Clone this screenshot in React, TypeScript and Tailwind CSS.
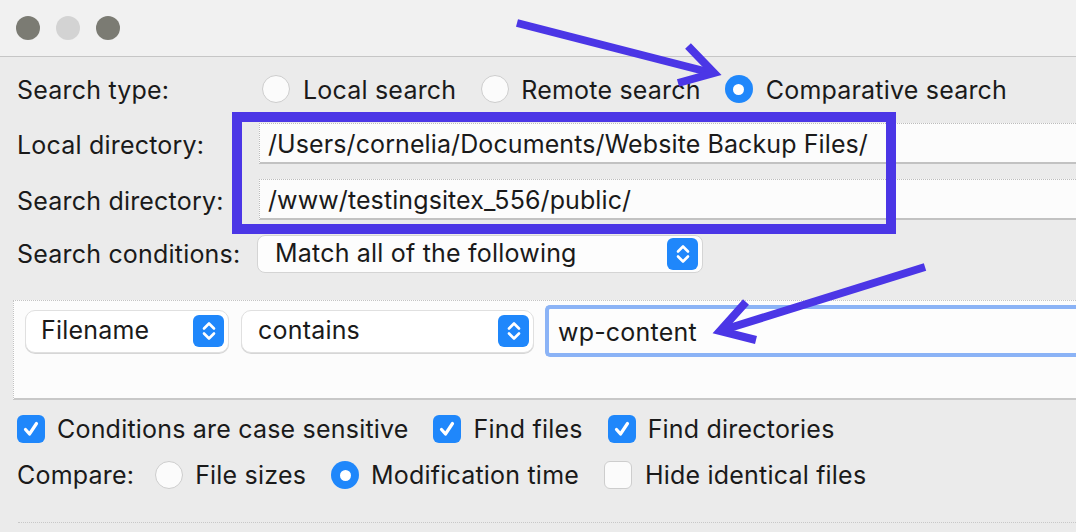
import React from 'react';

const font = { fontFamily: 'Inter, "Noto Sans", sans-serif' };

const Stepper = () => (
  <div className="flex h-[32px] w-[31px] shrink-0 items-center justify-center rounded-[6px] bg-[#1f87fb]">
    <svg width="16" height="24" viewBox="0 0 16 24" fill="none" stroke="white" strokeWidth="2.6" strokeLinecap="round" strokeLinejoin="round">
      <path d="M3 9.5 L8 4.5 L13 9.5" />
      <path d="M3 14.5 L8 19.5 L13 14.5" />
    </svg>
  </div>
);

const Radio = ({ checked }: { checked?: boolean }) =>
  checked ? (
    <div className="flex h-[28px] w-[28px] shrink-0 items-center justify-center rounded-full bg-[#1f87fb]">
      <div className="h-[11px] w-[11px] rounded-full bg-white" />
    </div>
  ) : (
    <div className="h-[28px] w-[28px] shrink-0 rounded-full border border-[#cdcdcd] bg-[#fbfbfb]" />
  );

const Checkbox = ({ checked }: { checked?: boolean }) =>
  checked ? (
    <div className="flex h-[28px] w-[28px] shrink-0 items-center justify-center rounded-[6px] bg-[#1f87fb]">
      <svg width="20" height="20" viewBox="0 0 20 20" fill="none" stroke="white" strokeWidth="3.2" strokeLinecap="round" strokeLinejoin="round">
        <path d="M4.5 10.5 L8.5 15 L15.5 4.5" />
      </svg>
    </div>
  ) : (
    <div className="h-[28px] w-[28px] shrink-0 rounded-[6px] border border-[#cdcdcd] bg-[#fbfbfb]" />
  );

const Label = ({ children }: { children: React.ReactNode }) => (
  <div className="w-[241px] shrink-0 pl-[17px] whitespace-nowrap">{children}</div>
);

const PathInput = ({ value }: { value: string }) => (
  <div className="flex h-[41px] flex-1 items-center border-t border-l border-dotted border-[#bcbcbc] bg-[#fcfcfc] pl-[8px] tracking-[0.1px] whitespace-nowrap shadow-[inset_0_-2px_0_#c2c2c2]">
    <span className="relative top-[1px]">{value}</span>
  </div>
);

export default function App() {
  return (
    <div className="relative h-[532px] w-[1076px] overflow-hidden bg-[#ebebeb] text-[25px] tracking-[0.2px] text-[#1a1a1a]" style={font}>
      {/* title bar */}
      <div className="flex h-[57px] items-center gap-[16px] border-b border-[#c6c6c6] bg-[#f1f1f1] pl-[16px]">
        <div className="h-[24px] w-[24px] rounded-full bg-[#7b7b73]" />
        <div className="h-[24px] w-[24px] rounded-full bg-[#d3d3d3]" />
        <div className="h-[24px] w-[24px] rounded-full bg-[#7b7b73]" />
      </div>

      {/* search type */}
      <div className="flex h-[64px] items-center">
        <Label><span className="relative top-[2px]">Search type:</span></Label>
        <div className="flex items-center pl-[21px]">
          <Radio />
          <span className="relative top-[2px] ml-[13px]">Local search</span>
          <div className="ml-[25px]"><Radio /></div>
          <span className="relative top-[2px] ml-[12px]">Remote search</span>
          <div className="ml-[24px]"><Radio checked /></div>
          <span className="relative top-[2px] ml-[13px]">Comparative search</span>
        </div>
      </div>

      <div className="mt-[2px] flex items-center">
        <Label><span className="relative top-[2px]">Local directory:</span></Label>
        <div className="ml-[18px] flex flex-1">
          <PathInput value="/Users/cornelia/Documents/Website Backup Files/" />
        </div>
      </div>

      <div className="mt-[15px] flex items-center">
        <Label><span className="relative top-[2px]">Search directory:</span></Label>
        <div className="ml-[18px] flex flex-1">
          <PathInput value="/www/testingsitex_556/public/" />
        </div>
      </div>

      <div className="mt-[15px] flex items-center">
        <Label><span className="relative top-[1px]">Search conditions:</span></Label>
        <div className="ml-[16px] flex h-[38px] w-[446px] items-center justify-between rounded-[8px] border border-[#d4d4d4] bg-[#fdfdfd] pr-[4px] pl-[17px]">
          <span>Match all of the following</span>
          <Stepper />
        </div>
      </div>

      {/* condition panel */}
      <div className="mt-[27px] ml-[13px] h-[100px] border-t border-l border-dotted border-[#c4c4c4] bg-[#fcfcfc] shadow-[inset_0_-2px_0_#c8c8c8]">
        <div className="flex items-center pt-[4px] pl-[11px]">
          <div className="flex h-[43px] w-[204px] items-center justify-between rounded-[10px] border border-[#e0e0e0] bg-white pr-[4px] pl-[15px] shadow-[0_1px_0_#d6d6d6]">
            <span>Filename</span>
            <Stepper />
          </div>
          <div className="ml-[12px] flex h-[43px] w-[293px] items-center justify-between rounded-[10px] border border-[#e0e0e0] bg-white pr-[4px] pl-[16px] shadow-[0_1px_0_#d6d6d6]">
            <span>contains</span>
            <Stepper />
          </div>
          <div className="ml-[11px] flex h-[52px] flex-1 items-center rounded-l-[5px] border-[4px] border-r-0 border-[#8bb3f6] bg-[#fdfdfd] pl-[9px]">
            <span className="relative top-[2px]">wp-content</span>
          </div>
        </div>
      </div>

      {/* options */}
      <div className="mt-[14px] flex h-[30px] items-center pl-[17px]">
        <Checkbox checked />
        <span className="relative top-[1px] ml-[12px]">Conditions are case sensitive</span>
        <div className="ml-[24px]"><Checkbox checked /></div>
        <span className="relative top-[1px] ml-[13px]">Find files</span>
        <div className="ml-[25px]"><Checkbox checked /></div>
        <span className="relative top-[1px] ml-[12px]">Find directories</span>
      </div>

      <div className="mt-[16px] flex h-[30px] items-center pl-[17px]">
        <span className="relative top-[1px]">Compare:</span>
        <div className="ml-[21px]"><Radio /></div>
        <span className="relative top-[1px] ml-[12px]">File sizes</span>
        <div className="ml-[25px]"><Radio checked /></div>
        <span className="relative top-[1px] ml-[12px]">Modification time</span>
        <div className="ml-[25px]"><Checkbox /></div>
        <span className="relative top-[1px] ml-[13px]">Hide identical files</span>
      </div>

      <div className="mt-[32px] ml-[18px] border-t border-dotted border-[#c8c8c8]" />

      {/* annotation box */}
      <div className="pointer-events-none absolute top-[112px] left-[232px] h-[122px] w-[664px] border-[10px] border-[#4b36e6]" />

      {/* annotation arrows */}
      <svg className="pointer-events-none absolute top-0 left-0" width="1076" height="532" viewBox="0 0 1076 532" fill="none" stroke="#4b36e6" strokeWidth="8" strokeLinejoin="miter">
        <path d="M517 23 L712 73" />
        <path d="M688 46 L714 73 L678 83" />
        <path d="M925 267 L723 330" />
        <path d="M746 302 L720 331 L756 340" />
      </svg>
    </div>
  );
}
